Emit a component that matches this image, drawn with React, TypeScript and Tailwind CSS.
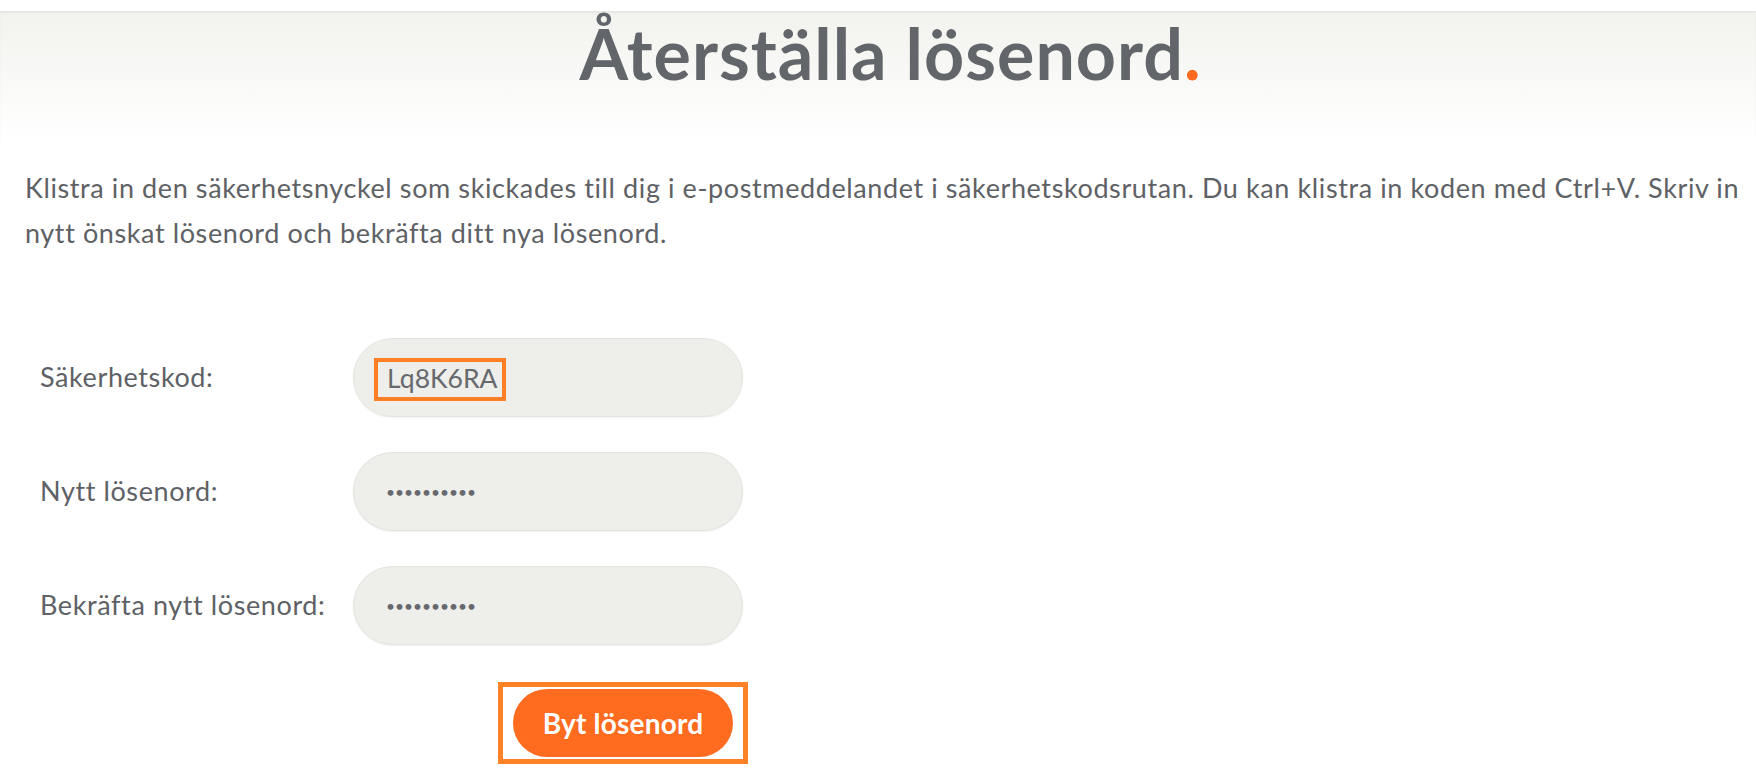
import React from "react";

const fields = [
  { id: "code", label: "Säkerhetskod:", type: "text", value: "Lq8K6RA" },
  { id: "pw", label: "Nytt lösenord:", type: "password", value: "hemligt123" },
  { id: "pw2", label: "Bekräfta nytt lösenord:", type: "password", value: "hemligt123" },
];

export default function App() {
  return (
    <div className="min-h-screen bg-white font-['Lato',sans-serif] text-[#5e6165]">
      <div className="h-[11px] bg-white" />

      {/* rubrik */}
      <header className="h-[130px] bg-gradient-to-b from-[#f2f2ee] to-white pl-[25px] pt-[7px] text-center shadow-[inset_0_2px_2px_rgba(0,0,0,0.05)]">
        <h1 className="text-[70px] font-bold leading-none tracking-[1px] text-[#626569]">
          Återställa lösenord<span className="text-[#ff6a1e]">.</span>
        </h1>
      </header>

      <main className="pl-[25px]">
        <p className="mt-[24px] text-[27px] leading-[45px] tracking-[0.6px]">
          Klistra in den säkerhetsnyckel som skickades till dig i e-postmeddelandet i säkerhetskodsrutan. Du kan klistra
          in koden med Ctrl+V. Skriv in
          <br />
          nytt önskat lösenord och bekräfta ditt nya lösenord.
        </p>

        <form className="mt-[83px] pl-[15px]" onSubmit={(e) => e.preventDefault()}>
          <div className="flex flex-col gap-[35px]">
            {fields.map((f, i) => (
              <div key={f.id} className="flex items-center">
                <label htmlFor={f.id} className="w-[313px] text-[27px] tracking-[0.6px]">
                  {f.label}
                </label>
                <div className="relative">
                  <input
                    id={f.id}
                    type={f.type}
                    defaultValue={f.value}
                    readOnly
                    className={
                      f.type === "password"
                        ? "h-[79px] w-[390px] rounded-full border border-[#e4e4df] bg-[#eeeeea] pl-[32px] text-[15.5px] text-[#66696d] shadow-[0_1px_2px_rgba(0,0,0,0.06)] outline-none"
                        : "h-[79px] w-[390px] rounded-full border border-[#e4e4df] bg-[#eeeeea] pl-[33px] text-[26.5px] text-[#66696d] shadow-[0_1px_2px_rgba(0,0,0,0.06)] outline-none"
                    }
                  />
                  {i === 0 && (
                    <span className="pointer-events-none absolute left-[21px] top-[20px] h-[43px] w-[132px] border-4 border-[#ff7f24]" />
                  )}
                </div>
              </div>
            ))}
          </div>

          <div className="mt-[37px] ml-[458px] inline-flex border-[5px] border-[#ff8125] px-[10px] py-[2px]">
            <button
              type="submit"
              className="h-[68px] w-[220px] rounded-full bg-[#ff6b1f] text-[28px] font-bold tracking-[0.2px] text-white"
            >
              Byt lösenord
            </button>
          </div>
        </form>
      </main>
    </div>
  );
}
